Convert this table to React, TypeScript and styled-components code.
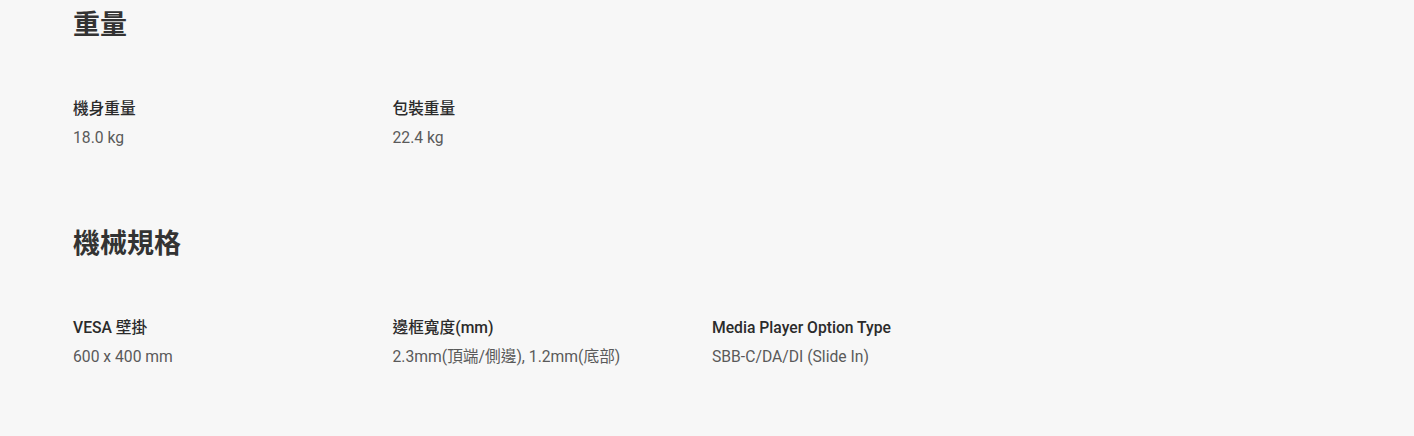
import React from 'react'
import styled, { createGlobalStyle } from 'styled-components'

const GlobalStyle = createGlobalStyle`
  html, body {
    margin: 0;
    padding: 0;
    background: #f7f7f7;
  }
  body {
    font-family: Roboto, 'Noto Sans CJK TC', sans-serif;
  }
`

const Page = styled.div`
  display: flex;
  flex-direction: column;
  gap: 76px;
  padding: 7px 0 0 73px;
  min-height: 430px;
  box-sizing: border-box;
`

const Section = styled.section`
  display: flex;
  flex-direction: column;
  gap: 54px;
`

const Heading = styled.h2`
  margin: 0;
  font-size: 27px;
  line-height: 36px;
  font-weight: 700;
  color: #333;
`

const SpecGrid = styled.div`
  display: grid;
  grid-template-columns: repeat(3, 319.5px);
`

const Spec = styled.div`
  display: flex;
  flex-direction: column;
  gap: 5px;
`

const Label = styled.div`
  font-size: 15.7px;
  line-height: 24px;
  font-weight: 500;
  color: #2b2b2b;
`

const Value = styled.div`
  font-size: 15.7px;
  line-height: 24px;
  color: #5a5a5a;
`

type Item = { label: string; value: string }

const sections: { title: string; items: Item[] }[] = [
  {
    title: '重量',
    items: [
      { label: '機身重量', value: '18.0 kg' },
      { label: '包裝重量', value: '22.4 kg' }
    ]
  },
  {
    title: '機械規格',
    items: [
      { label: 'VESA 壁掛', value: '600 x 400 mm' },
      { label: '邊框寬度(mm)', value: '2.3mm(頂端/側邊), 1.2mm(底部)' },
      { label: 'Media Player Option Type', value: 'SBB-C/DA/DI (Slide In)' }
    ]
  }
]

const App = () => (
  <>
    <GlobalStyle />
    <Page>
      {sections.map(s => (
        <Section key={s.title}>
          <Heading>{s.title}</Heading>
          <SpecGrid>
            {s.items.map(i => (
              <Spec key={i.label}>
                <Label>{i.label}</Label>
                <Value>{i.value}</Value>
              </Spec>
            ))}
          </SpecGrid>
        </Section>
      ))}
    </Page>
  </>
)

export default App
